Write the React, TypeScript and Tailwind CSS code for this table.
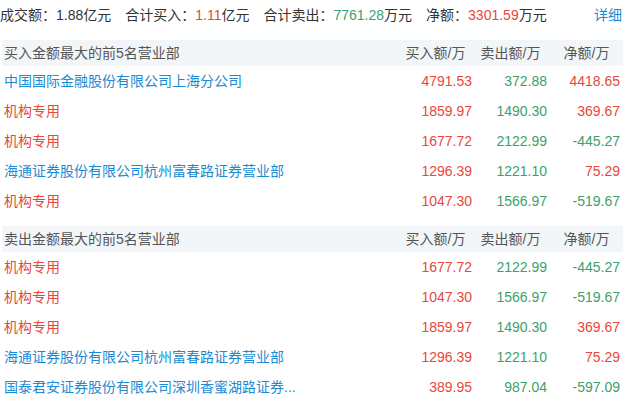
import React from 'react';

type Row = {
  name: string;
  isOrg: boolean;
  buy: string;
  sell: string;
  net: string;
};

const buyTop: Row[] = [
  { name: '中国国际金融股份有限公司上海分公司', isOrg: false, buy: '4791.53', sell: '372.88', net: '4418.65' },
  { name: '机构专用', isOrg: true, buy: '1859.97', sell: '1490.30', net: '369.67' },
  { name: '机构专用', isOrg: true, buy: '1677.72', sell: '2122.99', net: '-445.27' },
  { name: '海通证券股份有限公司杭州富春路证券营业部', isOrg: false, buy: '1296.39', sell: '1221.10', net: '75.29' },
  { name: '机构专用', isOrg: true, buy: '1047.30', sell: '1566.97', net: '-519.67' },
];

const sellTop: Row[] = [
  { name: '机构专用', isOrg: true, buy: '1677.72', sell: '2122.99', net: '-445.27' },
  { name: '机构专用', isOrg: true, buy: '1047.30', sell: '1566.97', net: '-519.67' },
  { name: '机构专用', isOrg: true, buy: '1859.97', sell: '1490.30', net: '369.67' },
  { name: '海通证券股份有限公司杭州富春路证券营业部', isOrg: false, buy: '1296.39', sell: '1221.10', net: '75.29' },
  { name: '国泰君安证券股份有限公司深圳香蜜湖路证券...', isOrg: false, buy: '389.95', sell: '987.04', net: '-597.09' },
];

const Section: React.FC<{ title: string; rows: Row[] }> = ({ title, rows }) => (
  <div>
    <div className="grid grid-cols-[1fr_75px_75px_75px] h-[26px] items-center bg-[#f3f6f9] text-[#555]">
      <div className="pl-[2px]">{title}</div>
      <div className="text-center">买入额/万</div>
      <div className="text-center">卖出额/万</div>
      <div className="text-center pl-[2px]">净额/万</div>
    </div>
    {rows.map((row, index) => (
      <div key={index} className="grid grid-cols-[1fr_75px_75px_75px] h-[30px] items-center">
        <div className={`pl-[2px] truncate ${row.isOrg ? 'text-[#e8473a]' : 'text-[#1b8bd3]'}`}>{row.name}</div>
        <div className="text-right text-[#e8473a] pr-[1px]">{row.buy}</div>
        <div className="text-right text-[#3d9f6c] pr-[1px]">{row.sell}</div>
        <div className={`text-right pr-[3px] ${row.net.startsWith('-') ? 'text-[#3d9f6c]' : 'text-[#e8473a]'}`}>
          {row.net}
        </div>
      </div>
    ))}
  </div>
);

export default function App() {
  return (
    <div className="w-[625px] h-[399px] bg-white overflow-hidden text-[14px] text-[#333] font-['Liberation_Sans','Noto_Sans_CJK_SC',sans-serif]">
      <div className="flex items-center h-[30px] pr-[3px]">
        <span className="mr-[14px]">
          成交额：<span>1.88</span>亿元
        </span>
        <span className="mr-[14px]">
          合计买入：<span className="text-[#e8473a]">1.11</span>亿元
        </span>
        <span className="mr-[14px]">
          合计卖出：<span className="text-[#3d9f6c]">7761.28</span>万元
        </span>
        <span>
          净额：<span className="text-[#e8473a]">3301.59</span>万元
        </span>
        <span className="ml-auto text-[#1b8bd3]">详细</span>
      </div>
      <div className="px-[2px] pt-[10px] flex flex-col gap-[10px]">
        <Section title="买入金额最大的前5名营业部" rows={buyTop} />
        <Section title="卖出金额最大的前5名营业部" rows={sellTop} />
      </div>
    </div>
  );
}
